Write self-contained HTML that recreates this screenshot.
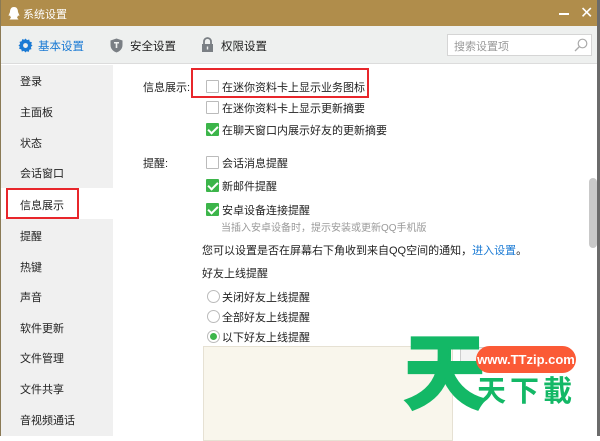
<!DOCTYPE html>
<html><head><meta charset="utf-8"><style>
*{margin:0;padding:0;box-sizing:border-box}
body{width:600px;height:436px;overflow:hidden;background:#fff;font-family:"Liberation Sans","Noto Sans CJK SC",sans-serif;font-size:11px;color:#222;position:relative}
.a{position:absolute;white-space:nowrap}
.cb{position:absolute;width:13px;height:13px;border:1px solid #bbb;background:#fff;border-radius:1px}
.cb.on{background:#3cb54a;border-color:#3cb54a}
.cb.on:after{content:"";position:absolute;left:3px;top:0px;width:4px;height:8px;border:solid #fff;border-width:0 2px 2px 0;transform:rotate(45deg)}
.rd{position:absolute;width:13px;height:13px;border:1px solid #bbb;border-radius:50%;background:#fff}
.rd.on:after{content:"";position:absolute;left:2px;top:2px;width:7px;height:7px;border-radius:50%;background:#3cb54a}
.sb{position:absolute;left:20px;font-size:11px;color:#222}
</style></head><body>
<div class="a" style="left:0;top:0;width:600px;height:26px;background:#b08d4b"></div>
<svg class="a" style="left:7px;top:6px" width="14" height="15" viewBox="0 0 14 15"><path d="M7 1C4 1 3 3.5 3 6L1.5 9.5C2 10 3 9.5 3 9.5 3.5 11 4 11.5 4 11.5L2.5 13.5H11.5L10 11.5C10 11.5 10.5 11 11 9.5 11 9.5 12 10 12.5 9.5L11 6C11 3.5 10 1 7 1Z" fill="#fff"/></svg>
<div class="a" style="left:23px;top:6px;color:#fff;font-size:11px">系统设置</div>
<div class="a" style="left:559px;top:13px;width:10px;height:2px;background:#fff"></div>
<div class="a" style="left:580px;top:3px;color:#fff;font-size:16px">✕</div>
<div class="a" style="left:0;top:26px;width:600px;height:38px;background:#eef0ef;border-bottom:1px solid #dcdcdc"></div>
<svg class="a" style="left:18px;top:38px" width="15" height="15" viewBox="0 0 16 16"><path d="M8 0.5l1.6 1.8 2.3-.7.6 2.3 2.3.6-.7 2.3L15.5 8l-1.8 1.6.7 2.3-2.3.6-.6 2.3-2.3-.7L8 15.5l-1.6-1.8-2.3.7-.6-2.3-2.3-.6.7-2.3L.5 8l1.8-1.6-.7-2.3 2.3-.6.6-2.3 2.3.7z" fill="#1a7ad4"/><circle cx="8" cy="8" r="2.6" fill="#eef0ef"/></svg>
<div class="a" style="left:38px;top:38px;color:#1a7ad4;font-size:11.5px">基本设置</div>
<svg class="a" style="left:110px;top:38px" width="13" height="15" viewBox="0 0 13 15"><path d="M6.5 0.5L12.5 2.5V7C12.5 11 9.5 13.5 6.5 14.5 3.5 13.5.5 11 .5 7V2.5Z" fill="#7a7f84"/><path d="M4 4h5v1.5H7.3V10H5.7V5.5H4z" fill="#eef0ef"/></svg>
<div class="a" style="left:130px;top:38px;font-size:11.5px">安全设置</div>
<svg class="a" style="left:201px;top:37px" width="13" height="16" viewBox="0 0 13 16"><path d="M3 7V4.5a3.5 3.5 0 0 1 7 0V7" fill="none" stroke="#7a7f84" stroke-width="1.8"/><rect x="1" y="7" width="11" height="8" fill="#7a7f84"/><rect x="5.8" y="9.5" width="1.4" height="3" fill="#eef0ef"/></svg>
<div class="a" style="left:221px;top:38px;font-size:11.5px">权限设置</div>
<div class="a" style="left:447px;top:34px;width:145px;height:22px;background:#fff;border:1px solid #d5d5d5"></div>
<div class="a" style="left:454px;top:38px;color:#999;font-size:11px">搜索设置项</div>
<svg class="a" style="left:574px;top:38px" width="14" height="14" viewBox="0 0 14 14"><circle cx="8.5" cy="5.5" r="4.3" fill="none" stroke="#aaa" stroke-width="1.2"/><path d="M5.5 8.5L1 13" stroke="#aaa" stroke-width="1.3"/></svg>
<div class="a" style="left:0;top:65px;width:113px;height:371px;background:#f0f0f0"></div>
<div class="a" style="left:0;top:188px;width:113px;height:31px;background:#fff"></div>
<div class="a" style="left:6px;top:188px;width:73px;height:31px;border:2px solid #e8262b"></div>
<div class="sb" style="top:73px">登录</div>
<div class="sb" style="top:104px">主面板</div>
<div class="sb" style="top:135px">状态</div>
<div class="sb" style="top:165px">会话窗口</div>
<div class="sb" style="top:197px">信息展示</div>
<div class="sb" style="top:228px">提醒</div>
<div class="sb" style="top:259px">热键</div>
<div class="sb" style="top:289px">声音</div>
<div class="sb" style="top:320px">软件更新</div>
<div class="sb" style="top:350px">文件管理</div>
<div class="sb" style="top:381px">文件共享</div>
<div class="sb" style="top:412px">音视频通话</div>
<div class="a" style="left:143px;top:79px">信息展示:</div>
<div class="a" style="left:191px;top:68px;width:178px;height:30px;border:2px solid #e8262b"></div>
<div class="cb" style="left:206px;top:80px"></div><div class="a" style="left:222px;top:79px">在迷你资料卡上显示业务图标</div>
<div class="cb" style="left:206px;top:101px"></div><div class="a" style="left:222px;top:100px">在迷你资料卡上显示更新摘要</div>
<div class="cb on" style="left:206px;top:123px"></div><div class="a" style="left:222px;top:122px">在聊天窗口内展示好友的更新摘要</div>
<div class="a" style="left:143px;top:155px">提醒:</div>
<div class="cb" style="left:206px;top:156px"></div><div class="a" style="left:222px;top:155px">会话消息提醒</div>
<div class="cb on" style="left:206px;top:179px"></div><div class="a" style="left:222px;top:178px">新邮件提醒</div>
<div class="cb on" style="left:206px;top:203px"></div><div class="a" style="left:222px;top:202px">安卓设备连接提醒</div>
<div class="a" style="left:221px;top:219px;color:#999;font-size:10px">当插入安卓设备时，提示安装或更新QQ手机版</div>
<div class="a" style="left:202px;top:242px">您可以设置是否在屏幕右下角收到来自QQ空间的通知，<span style="color:#1a7ad4">进入设置</span>。</div>
<div class="a" style="left:202px;top:265px">好友上线提醒</div>
<div class="rd" style="left:207px;top:290px"></div><div class="a" style="left:222px;top:289px">关闭好友上线提醒</div>
<div class="rd" style="left:207px;top:310px"></div><div class="a" style="left:222px;top:309px">全部好友上线提醒</div>
<div class="rd on" style="left:207px;top:330px"></div><div class="a" style="left:222px;top:329px">以下好友上线提醒</div>
<div class="a" style="left:203px;top:346px;width:250px;height:95px;background:#f9f6ec;border:1px solid #e6e1d3"></div>
<div class="a" style="left:460px;top:347px;width:60px;height:23px;background:#f3f3f3;border:1px solid #ccc"></div>
<div class="a" style="left:589px;top:178px;width:8px;height:70px;background:#c9c9c9;border-radius:4px"></div>
<div class="a" style="left:597px;top:0;width:3px;height:436px;background:#6b6b6b"></div>
<div class="a" style="left:0;top:0;width:1px;height:436px;background:#8a7a55"></div>
<div class="a" style="left:404px;top:334px;color:#13b866;font-size:82px;font-weight:bold;line-height:1;-webkit-text-stroke:3px #13b866">天</div>
<div class="a" style="left:476px;top:346px;width:100px;height:27px;background:#fb5a36;border-radius:14px;color:#fff;font-weight:bold;font-size:13px;text-align:center;line-height:27px">www.TTzip.com</div>
<div class="a" style="left:477px;top:375px;color:#13b866;font-size:29px;font-weight:bold;letter-spacing:4px;line-height:1.2">天下載</div>
</body></html>
